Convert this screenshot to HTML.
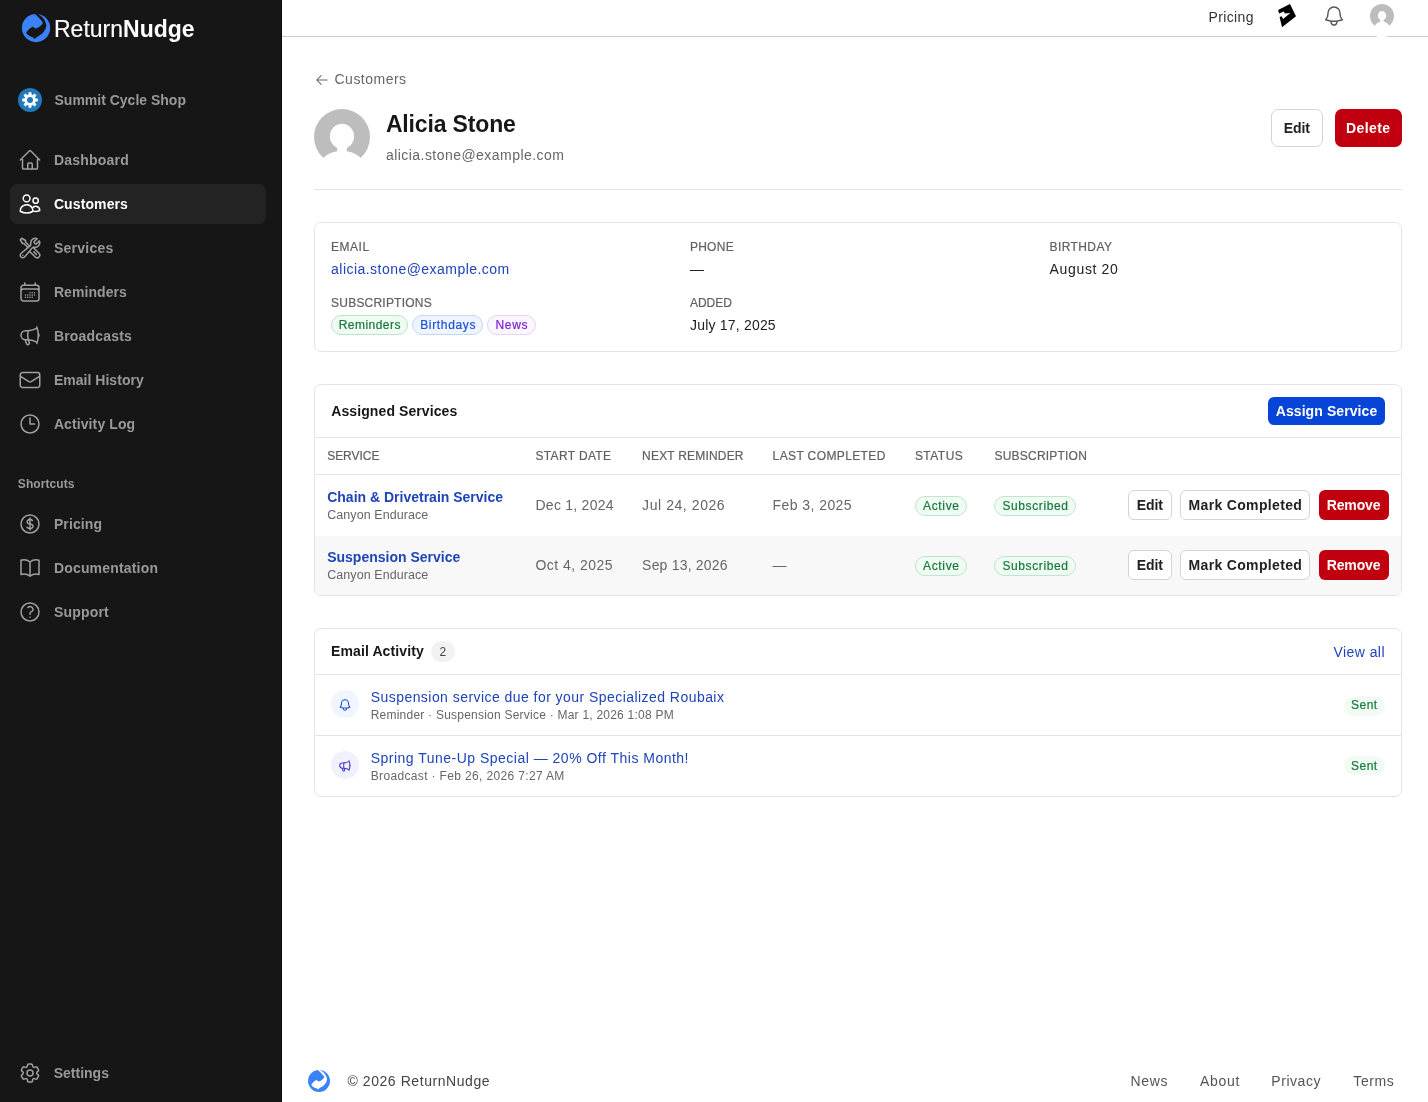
<!DOCTYPE html>
<html lang="en">
<head>
<meta charset="utf-8">
<title>Alicia Stone - ReturnNudge</title>
<style>
html,body{margin:0;padding:0;}
body{width:1428px;height:1102px;overflow:hidden;position:relative;background:#ffffff;font-family:"Liberation Sans",sans-serif;}
.t{position:absolute;white-space:nowrap;}
#tx{position:absolute;left:0;top:0;width:1428px;height:1102px;will-change:transform;}
.a{position:absolute;box-sizing:border-box;}
svg{position:absolute;overflow:visible;}
</style>
</head>
<body>
<!-- sidebar -->
<div class="a" style="left:0;top:0;width:282px;height:1102px;background:#161616;border-right:1px solid #0a0a0a"></div>
<div class="a" style="left:10px;top:184px;width:256px;height:40px;background:#232323;border-radius:7px"></div>
<!-- logo -->
<svg style="left:18px;top:10px" width="36" height="36" viewBox="0 0 1102 1102">
  <circle cx="552" cy="552" r="432" fill="#3b82f6"/>
  <path d="M490,95 C650,110 830,250 870,470 C850,620 760,740 620,800 L500,890 L465,840 C380,820 300,770 245,705 C300,610 380,540 450,515 L540,570 C640,545 720,470 765,390 C700,290 600,200 490,95 Z" fill="#161616"/>
</svg>
<div class="t" style="left:54.4px;top:14px;font-size:23px;line-height:30px;color:#fff;will-change:transform"><span style="-webkit-text-stroke:0.15px #fff">Return</span><b>Nudge</b></div>
<!-- summit -->
<svg style="left:18px;top:88px" width="24" height="24" viewBox="0 0 24 24">
  <circle cx="12" cy="12" r="12" fill="#2178bb"/>
  <g fill="#ffffff">
    <rect x="10.5" y="4.2" width="3" height="15.6" rx="0.5"/>
    <rect x="10.5" y="4.2" width="3" height="15.6" rx="0.5" transform="rotate(45 12 12)"/>
    <rect x="10.5" y="4.2" width="3" height="15.6" rx="0.5" transform="rotate(90 12 12)"/>
    <rect x="10.5" y="4.2" width="3" height="15.6" rx="0.5" transform="rotate(135 12 12)"/>
    <circle cx="12" cy="12" r="5.7"/>
  </g>
  <circle cx="12" cy="12" r="3" fill="#2178bb"/>
</svg>
<!-- header -->
<div class="a" style="left:282px;top:36px;width:1146px;height:1px;background:#cccccc"></div>
<svg style="left:1370px;top:4px" width="24" height="24" viewBox="0 0 56 56">
  <circle cx="28" cy="28" r="28" fill="#bdbdbd"/>
  <ellipse cx="28" cy="27.2" rx="9.7" ry="10.8" fill="#ffffff"/>
  <rect x="24" y="32" width="8" height="12" fill="#ffffff"/>
  <ellipse cx="28" cy="60.4" rx="18.8" ry="20" fill="#ffffff"/>
</svg>
<svg style="left:1276px;top:2px" width="24" height="28" viewBox="0 0 24 28">
  <path d="M14,2 L20,14.3 L6,25.3 L3.6,15.1 L5.6,14.3 L7.1,17 L14.3,11.1 L8.8,11.6 L7.9,9.6 L3,11.4 L2.1,7.9 Z" fill="#000000"/>
</svg>
<!-- page header -->
<svg style="left:314px;top:109px" width="56" height="56" viewBox="0 0 56 56">
  <defs><clipPath id="cav2"><circle cx="28" cy="28" r="28"/></clipPath></defs>
  <circle cx="28" cy="28" r="28" fill="#bdbdbd"/>
  <ellipse cx="28" cy="27.3" rx="12.1" ry="12.6" fill="#ffffff"/>
  <rect x="23.2" y="33" width="9.6" height="12" fill="#ffffff"/>
  <ellipse cx="28" cy="61.7" rx="24.2" ry="20" fill="#ffffff"/>
</svg>
<div class="a" style="left:1271px;top:109px;width:52px;height:38px;border:1px solid #d4d4d4;border-radius:7px;background:#fff"></div>
<div class="a" style="left:1335px;top:109px;width:67px;height:38px;border-radius:7px;background:#c0000f"></div>
<div class="a" style="left:314px;top:189px;width:1088px;height:1px;background:#e5e5e5"></div>
<!-- card1 -->
<div class="a" style="left:314px;top:222px;width:1088px;height:130px;border:1px solid #e5e5e5;border-radius:7px"></div>
<div class="a" style="left:331px;top:315px;width:77px;height:20px;border:1px solid #bbe5c8;border-radius:10px;background:#effbf3"></div>
<div class="a" style="left:412px;top:315px;width:71px;height:20px;border:1px solid #c3d7f5;border-radius:10px;background:#eef5fe"></div>
<div class="a" style="left:487px;top:315px;width:49px;height:20px;border:1px solid #e5d5f5;border-radius:10px;background:#faf5ff"></div>
<!-- card2 -->
<div class="a" style="left:314px;top:384px;width:1088px;height:212px;border:1px solid #e5e5e5;border-radius:7px;overflow:hidden">
  <div class="a" style="left:0;top:52px;width:1086px;height:1px;background:#e5e5e5"></div>
  <div class="a" style="left:0;top:89px;width:1086px;height:1px;background:#e5e5e5"></div>
  <div class="a" style="left:0;top:151px;width:1086px;height:59px;background:#f8f8f8"></div>
</div>
<div class="a" style="left:1268px;top:397px;width:117px;height:28px;border-radius:6px;background:#0645d8"></div>
<!-- badges & buttons rows -->
<div class="a" style="left:915px;top:496px;width:52px;height:20px;border:1px solid #bfe6cc;border-radius:10px;background:#effbf3"></div>
<div class="a" style="left:994px;top:496px;width:82px;height:20px;border:1px solid #bfe6cc;border-radius:10px;background:#effbf3"></div>
<div class="a" style="left:1128px;top:490px;width:44px;height:30px;border:1px solid #d4d4d4;border-radius:6px;background:#fff"></div>
<div class="a" style="left:1180px;top:490px;width:130px;height:30px;border:1px solid #d4d4d4;border-radius:6px;background:#fff"></div>
<div class="a" style="left:1319px;top:490px;width:70px;height:30px;border-radius:6px;background:#c0000f"></div>
<div class="a" style="left:915px;top:556px;width:52px;height:20px;border:1px solid #bfe6cc;border-radius:10px;background:#effbf3"></div>
<div class="a" style="left:994px;top:556px;width:82px;height:20px;border:1px solid #bfe6cc;border-radius:10px;background:#effbf3"></div>
<div class="a" style="left:1128px;top:550px;width:44px;height:30px;border:1px solid #d4d4d4;border-radius:6px;background:#fff"></div>
<div class="a" style="left:1180px;top:550px;width:130px;height:30px;border:1px solid #d4d4d4;border-radius:6px;background:#fff"></div>
<div class="a" style="left:1319px;top:550px;width:70px;height:30px;border-radius:6px;background:#c0000f"></div>
<!-- card3 -->
<div class="a" style="left:314px;top:628px;width:1088px;height:169px;border:1px solid #e5e5e5;border-radius:7px">
  <div class="a" style="left:0;top:45px;width:1086px;height:1px;background:#e5e5e5"></div>
  <div class="a" style="left:0;top:106px;width:1086px;height:1px;background:#e5e5e5"></div>
</div>
<div class="a" style="left:430.5px;top:641.3px;width:24px;height:21px;border-radius:11px;background:#f2f2f2"></div>
<div class="a" style="left:331px;top:690px;width:28px;height:28px;border-radius:50%;background:#f0f5fe"></div>
<div class="a" style="left:331px;top:751px;width:28px;height:28px;border-radius:50%;background:#f1f0fd"></div>
<div class="a" style="left:1344px;top:697px;width:41px;height:19px;border-radius:10px;background:#f1fbf4"></div>
<div class="a" style="left:1344px;top:756px;width:41px;height:19px;border-radius:10px;background:#f1fbf4"></div>
<!-- footer -->
<svg style="left:304.5px;top:1066.5px" width="28" height="28" viewBox="0 0 1102 1102">
  <circle cx="552" cy="552" r="432" fill="#3b82f6"/>
  <path d="M490,95 C650,110 830,250 870,470 C850,620 760,740 620,800 L500,890 L465,840 C380,820 300,770 245,705 C300,610 380,540 450,515 L540,570 C640,545 720,470 765,390 C700,290 600,200 490,95 Z" fill="#ffffff"/>
</svg>

<svg style="left:18px;top:148px" width="24" height="24" viewBox="0 0 24 24"><path d="M2.25 12l8.954-8.955c.44-.439 1.152-.439 1.591 0L21.75 12M4.5 9.75v10.125c0 .621.504 1.125 1.125 1.125H9.75v-4.875c0-.621.504-1.125 1.125-1.125h2.25c.621 0 1.125.504 1.125 1.125V21h4.125c.621 0 1.125-.504 1.125-1.125V9.75M8.25 21h8.25" fill="none" stroke="#a0a0a0" stroke-width="1.5" stroke-linecap="round" stroke-linejoin="round"/></svg>
<svg style="left:18px;top:192px" width="24" height="24" viewBox="0 0 24 24"><path d="M15 19.128a9.38 9.38 0 002.625.372 9.337 9.337 0 004.121-.952 4.125 4.125 0 00-7.533-2.493M15 19.128v-.003c0-1.113-.285-2.16-.786-3.07M15 19.128v.106A12.318 12.318 0 018.624 21c-2.331 0-4.512-.645-6.374-1.766l-.001-.109a6.375 6.375 0 0111.964-3.07M12 6.375a3.375 3.375 0 11-6.75 0 3.375 3.375 0 016.75 0zm8.25 2.25a2.625 2.625 0 11-5.25 0 2.625 2.625 0 015.25 0z" fill="none" stroke="#ffffff" stroke-width="1.5" stroke-linecap="round" stroke-linejoin="round"/></svg>
<svg style="left:18px;top:236px" width="24" height="24" viewBox="0 0 24 24"><path d="M11.42 15.17L17.25 21A2.652 2.652 0 0021 17.25l-5.877-5.877M11.42 15.17l2.496-3.03c.317-.384.74-.626 1.208-.766M11.42 15.17l-4.655 5.653a2.548 2.548 0 11-3.586-3.586l6.837-5.63m5.108-.233c.55-.164 1.163-.188 1.743-.14a4.5 4.5 0 004.486-6.336l-3.276 3.277a3.004 3.004 0 01-2.25-2.25l3.276-3.276a4.5 4.5 0 00-6.336 4.486c.091 1.076-.071 2.264-.904 2.95l-.102.085m-1.745 1.437L5.909 7.5H4.5L2.25 3.75l1.5-1.5L7.5 4.5v1.409l4.26 4.26m-1.745 1.437l1.745-1.437m6.615 8.206L15.75 15.75M4.867 19.125h.008v.008h-.008v-.008z" fill="none" stroke="#a0a0a0" stroke-width="1.5" stroke-linecap="round" stroke-linejoin="round"/></svg>
<svg style="left:18px;top:280px" width="24" height="24" viewBox="0 0 24 24"><path d="M6.75 3v2.25M17.25 3v2.25M3 18.75V7.5a2.25 2.25 0 012.25-2.25h13.5A2.25 2.25 0 0121 7.5v11.25m-18 0A2.25 2.25 0 005.25 21h13.5A2.25 2.25 0 0021 18.75m-18 0v-7.5A2.25 2.25 0 015.25 9h13.5A2.25 2.25 0 0121 11.25v7.5m-9-6h.008v.008H12v-.008zM12 15h.008v.008H12V15zm0 2.25h.008v.008H12v-.008zM9.75 15h.008v.008H9.75V15zm0 2.25h.008v.008H9.75v-.008zM7.5 15h.008v.008H7.5V15zm0 2.25h.008v.008H7.5v-.008zm6.75-4.5h.008v.008h-.008v-.008zm0 2.25h.008v.008h-.008V15zm0 2.25h.008v.008h-.008v-.008zm2.25-4.5h.008v.008H16.5v-.008zm0 2.25h.008v.008H16.5V15z" fill="none" stroke="#a0a0a0" stroke-width="1.5" stroke-linecap="round" stroke-linejoin="round"/></svg>
<svg style="left:18px;top:324px" width="24" height="24" viewBox="0 0 24 24"><path d="M10.34 15.84c-.688-.06-1.386-.09-2.09-.09H7.5a4.5 4.5 0 110-9h.75c.704 0 1.402-.03 2.09-.09m0 9.18c.253.962.584 1.892.985 2.783.247.55.06 1.21-.463 1.51l-.657.38c-.551.318-1.26.117-1.527-.461a20.845 20.845 0 01-1.44-4.282m3.102.069a18.03 18.03 0 01-.59-4.59c0-1.586.205-3.124.59-4.59m0 9.18a23.848 23.848 0 018.835 2.535M10.34 6.66a23.847 23.847 0 008.835-2.535m0 0A23.74 23.74 0 0018.795 3m.38 1.125a23.91 23.91 0 011.014 5.395m-1.014 8.855c-.118.38-.245.754-.38 1.125m.38-1.125a23.91 23.91 0 001.014-5.395m0-3.46c.495.413.811 1.035.811 1.73 0 .695-.316 1.317-.811 1.73m0-3.46a24.347 24.347 0 010 3.46" fill="none" stroke="#a0a0a0" stroke-width="1.5" stroke-linecap="round" stroke-linejoin="round"/></svg>
<svg style="left:18px;top:368px" width="24" height="24" viewBox="0 0 24 24"><path d="M21.75 6.75v10.5a2.25 2.25 0 01-2.25 2.25h-15a2.25 2.25 0 01-2.25-2.25V6.75m19.5 0A2.25 2.25 0 0019.5 4.5h-15a2.25 2.25 0 00-2.25 2.25m19.5 0v.243a2.25 2.25 0 01-1.07 1.916l-7.5 4.615a2.25 2.25 0 01-2.36 0L3.32 8.91a2.25 2.25 0 01-1.07-1.916V6.75" fill="none" stroke="#a0a0a0" stroke-width="1.5" stroke-linecap="round" stroke-linejoin="round"/></svg>
<svg style="left:18px;top:412px" width="24" height="24" viewBox="0 0 24 24"><path d="M12 6v6h4.5m4.5 0a9 9 0 11-18 0 9 9 0 0118 0z" fill="none" stroke="#a0a0a0" stroke-width="1.5" stroke-linecap="round" stroke-linejoin="round"/></svg>
<svg style="left:18px;top:512px" width="24" height="24" viewBox="0 0 24 24"><path d="M12 6v12m-3-2.818l.879.659c1.171.879 3.07.879 4.242 0 1.172-.879 1.172-2.303 0-3.182C13.536 12.219 12.768 12 12 12c-.725 0-1.45-.22-2.003-.659-1.106-.879-1.106-2.303 0-3.182s2.9-.879 4.006 0l.415.33M21 12a9 9 0 11-18 0 9 9 0 0118 0z" fill="none" stroke="#a0a0a0" stroke-width="1.5" stroke-linecap="round" stroke-linejoin="round"/></svg>
<svg style="left:18px;top:556px" width="24" height="24" viewBox="0 0 24 24"><path d="M12 6.042A8.967 8.967 0 006 3.75c-1.052 0-2.062.18-3 .512v14.25A8.987 8.987 0 016 18c2.305 0 4.408.867 6 2.292m0-14.25a8.966 8.966 0 016-2.292c1.052 0 2.062.18 3 .512v14.25A8.987 8.987 0 0018 18a8.967 8.967 0 00-6 2.292m0-14.25v14.25" fill="none" stroke="#a0a0a0" stroke-width="1.5" stroke-linecap="round" stroke-linejoin="round"/></svg>
<svg style="left:18px;top:600px" width="24" height="24" viewBox="0 0 24 24"><path d="M9.879 7.519c1.171-1.025 3.071-1.025 4.242 0 1.172 1.025 1.172 2.687 0 3.712-.203.179-.43.326-.67.442-.745.361-1.45.999-1.45 1.827v.75M21 12a9 9 0 11-18 0 9 9 0 0118 0zm-9 5.25h.008v.008H12v-.008z" fill="none" stroke="#a0a0a0" stroke-width="1.5" stroke-linecap="round" stroke-linejoin="round"/></svg>
<svg style="left:18px;top:1061px" width="24" height="24" viewBox="0 0 24 24"><path d="M9.594 3.94c.09-.542.56-.94 1.11-.94h2.593c.55 0 1.02.398 1.11.94l.213 1.281c.063.374.313.686.645.87.074.04.147.083.22.127.325.196.72.257 1.075.124l1.217-.456a1.125 1.125 0 011.37.49l1.296 2.247a1.125 1.125 0 01-.26 1.431l-1.003.827c-.293.241-.438.613-.43.992a7.723 7.723 0 010 .255c-.008.378.137.75.43.991l1.004.827c.424.35.534.955.26 1.43l-1.298 2.247a1.125 1.125 0 01-1.369.491l-1.217-.456c-.355-.133-.75-.072-1.076.124a6.47 6.47 0 01-.22.128c-.331.183-.581.495-.644.869l-.213 1.281c-.09.543-.56.94-1.11.94h-2.594c-.55 0-1.019-.398-1.11-.94l-.213-1.281c-.062-.374-.312-.686-.644-.87a6.52 6.52 0 01-.22-.127c-.325-.196-.72-.257-1.076-.124l-1.217.456a1.125 1.125 0 01-1.369-.49l-1.297-2.247a1.125 1.125 0 01.26-1.431l1.004-.827c.292-.24.437-.613.43-.991a6.932 6.932 0 010-.255c.007-.38-.138-.751-.43-.992l-1.004-.827a1.125 1.125 0 01-.26-1.43l1.297-2.247a1.125 1.125 0 011.37-.491l1.216.456c.356.133.751.072 1.076-.124.072-.044.146-.086.22-.128.332-.183.582-.495.644-.869l.214-1.28zM15 12a3 3 0 11-6 0 3 3 0 016 0z" fill="none" stroke="#a0a0a0" stroke-width="1.5" stroke-linecap="round" stroke-linejoin="round"/></svg>
<svg style="left:1322px;top:4px" width="24" height="24" viewBox="0 0 24 24"><path d="M14.857 17.082a23.848 23.848 0 005.454-1.31A8.967 8.967 0 0118 9.75v-.7V9A6 6 0 006 9v.75a8.967 8.967 0 01-2.312 6.022c1.733.64 3.56 1.085 5.455 1.31m5.714 0a24.255 24.255 0 01-5.714 0m5.714 0a3 3 0 11-5.714 0" fill="none" stroke="#555555" stroke-width="1.4" stroke-linecap="round" stroke-linejoin="round"/></svg>
<svg style="left:315px;top:73px" width="14" height="14" viewBox="0 0 24 24"><path d="M10.5 19.5L3 12m0 0l7.5-7.5M3 12h18" fill="none" stroke="#666666" stroke-width="1.8" stroke-linecap="round" stroke-linejoin="round"/></svg>
<svg style="left:338px;top:697.5px" width="14" height="14" viewBox="0 0 24 24"><path d="M14.857 17.082a23.848 23.848 0 005.454-1.31A8.967 8.967 0 0118 9.75v-.7V9A6 6 0 006 9v.75a8.967 8.967 0 01-2.312 6.022c1.733.64 3.56 1.085 5.455 1.31m5.714 0a24.255 24.255 0 01-5.714 0m5.714 0a3 3 0 11-5.714 0" fill="none" stroke="#1d4ed8" stroke-width="1.8" stroke-linecap="round" stroke-linejoin="round"/></svg>
<svg style="left:338px;top:758.5px" width="14" height="14" viewBox="0 0 24 24"><path d="M10.34 15.84c-.688-.06-1.386-.09-2.09-.09H7.5a4.5 4.5 0 110-9h.75c.704 0 1.402-.03 2.09-.09m0 9.18c.253.962.584 1.892.985 2.783.247.55.06 1.21-.463 1.51l-.657.38c-.551.318-1.26.117-1.527-.461a20.845 20.845 0 01-1.44-4.282m3.102.069a18.03 18.03 0 01-.59-4.59c0-1.586.205-3.124.59-4.59m0 9.18a23.848 23.848 0 018.835 2.535M10.34 6.66a23.847 23.847 0 008.835-2.535m0 0A23.74 23.74 0 0018.795 3m.38 1.125a23.91 23.91 0 011.014 5.395m-1.014 8.855c-.118.38-.245.754-.38 1.125m.38-1.125a23.91 23.91 0 001.014-5.395m0-3.46c.495.413.811 1.035.811 1.73 0 .695-.316 1.317-.811 1.73m0-3.46a24.347 24.347 0 010 3.46" fill="none" stroke="#4338ca" stroke-width="1.8" stroke-linecap="round" stroke-linejoin="round"/></svg>
<div id="tx">
<div class="t" style="left:54.5px;top:91.1px;font-size:14px;line-height:18px;color:#999999;font-weight:700">Summit Cycle Shop</div>
<div class="t" style="left:53.9px;top:151.1px;font-size:14px;line-height:18px;color:#999999;font-weight:700;letter-spacing:0.23px">Dashboard</div>
<div class="t" style="left:53.9px;top:195.1px;font-size:14px;line-height:18px;color:#ffffff;font-weight:700;letter-spacing:0.11px">Customers</div>
<div class="t" style="left:53.9px;top:239.1px;font-size:14px;line-height:18px;color:#999999;font-weight:700;letter-spacing:0.26px">Services</div>
<div class="t" style="left:53.9px;top:283.1px;font-size:14px;line-height:18px;color:#999999;font-weight:700;letter-spacing:0.07px">Reminders</div>
<div class="t" style="left:53.9px;top:327.1px;font-size:14px;line-height:18px;color:#999999;font-weight:700;letter-spacing:0.18px">Broadcasts</div>
<div class="t" style="left:53.9px;top:371.1px;font-size:14px;line-height:18px;color:#999999;font-weight:700;letter-spacing:0.03px">Email History</div>
<div class="t" style="left:53.9px;top:415.1px;font-size:14px;line-height:18px;color:#999999;font-weight:700;letter-spacing:0.10px">Activity Log</div>
<div class="t" style="left:17.8px;top:477.3px;font-size:12px;line-height:15px;color:#9a9a9a;font-weight:700;letter-spacing:0.09px">Shortcuts</div>
<div class="t" style="left:53.9px;top:515.1px;font-size:14px;line-height:18px;color:#999999;font-weight:700;letter-spacing:0.12px">Pricing</div>
<div class="t" style="left:53.9px;top:559.1px;font-size:14px;line-height:18px;color:#999999;font-weight:700;letter-spacing:0.18px">Documentation</div>
<div class="t" style="left:53.9px;top:603.1px;font-size:14px;line-height:18px;color:#999999;font-weight:700;letter-spacing:0.19px">Support</div>
<div class="t" style="left:53.7px;top:1064.1px;font-size:14px;line-height:18px;color:#999999;font-weight:700">Settings</div>
<div class="t" style="left:1208.5px;top:8.1px;font-size:14px;line-height:18px;color:#333333;letter-spacing:0.37px">Pricing</div>
<div class="t" style="left:334.5px;top:70.1px;font-size:14px;line-height:18px;color:#666666;letter-spacing:0.49px">Customers</div>
<div class="t" style="left:385.9px;top:109.9px;font-size:23px;line-height:29px;color:#171717;font-weight:700;letter-spacing:-0.15px">Alicia Stone</div>
<div class="t" style="left:385.9px;top:146.1px;font-size:14px;line-height:18px;color:#666666;letter-spacing:0.46px">alicia.stone@example.com</div>
<div class="t" style="left:1283.8px;top:118.9px;font-size:14px;line-height:18px;color:#222222;font-weight:700;letter-spacing:-0.15px">Edit</div>
<div class="t" style="left:1346.1px;top:118.9px;font-size:14px;line-height:18px;color:#ffffff;font-weight:700;letter-spacing:0.39px">Delete</div>
<div class="t" style="left:331.1px;top:240.3px;font-size:12px;line-height:15px;color:#606060;-webkit-text-stroke:0.2px #606060;letter-spacing:0.50px">EMAIL</div>
<div class="t" style="left:331.1px;top:260.1px;font-size:14px;line-height:18px;color:#1e44b8;letter-spacing:0.46px">alicia.stone@example.com</div>
<div class="t" style="left:331.1px;top:296.3px;font-size:12px;line-height:15px;color:#606060;-webkit-text-stroke:0.2px #606060;letter-spacing:0.21px">SUBSCRIPTIONS</div>
<div class="t" style="left:689.9px;top:240.3px;font-size:12px;line-height:15px;color:#606060;-webkit-text-stroke:0.2px #606060;letter-spacing:0.28px">PHONE</div>
<div class="t" style="left:689.9px;top:260.1px;font-size:14px;line-height:18px;color:#222222">—</div>
<div class="t" style="left:689.9px;top:296.3px;font-size:12px;line-height:15px;color:#606060;-webkit-text-stroke:0.2px #606060">ADDED</div>
<div class="t" style="left:690.1px;top:315.8px;font-size:14px;line-height:18px;color:#222222;letter-spacing:0.19px">July 17, 2025</div>
<div class="t" style="left:1049.6px;top:240.3px;font-size:12px;line-height:15px;color:#606060;-webkit-text-stroke:0.2px #606060;letter-spacing:0.39px">BIRTHDAY</div>
<div class="t" style="left:1049.6px;top:259.7px;font-size:14px;line-height:18px;color:#222222;letter-spacing:0.65px">August 20</div>
<div class="t" style="left:338.7px;top:318.1px;font-size:12px;line-height:15px;color:#15783a;-webkit-text-stroke:0.2px #15783a;letter-spacing:0.47px">Reminders</div>
<div class="t" style="left:420.2px;top:318.1px;font-size:12px;line-height:15px;color:#1d4ed8;-webkit-text-stroke:0.2px #1d4ed8;letter-spacing:0.66px">Birthdays</div>
<div class="t" style="left:495.5px;top:318.1px;font-size:12px;line-height:15px;color:#7e22ce;-webkit-text-stroke:0.2px #7e22ce;letter-spacing:0.66px">News</div>
<div class="t" style="left:331.3px;top:402.1px;font-size:14px;line-height:18px;color:#171717;font-weight:700;letter-spacing:0.09px">Assigned Services</div>
<div class="t" style="left:1275.7px;top:402.1px;font-size:14px;line-height:18px;color:#ffffff;font-weight:700;letter-spacing:0.09px">Assign Service</div>
<div class="t" style="left:327.2px;top:449.3px;font-size:12px;line-height:15px;color:#606060;-webkit-text-stroke:0.2px #606060;letter-spacing:-0.04px">SERVICE</div>
<div class="t" style="left:535.5px;top:449.3px;font-size:12px;line-height:15px;color:#606060;-webkit-text-stroke:0.2px #606060;letter-spacing:0.34px">START DATE</div>
<div class="t" style="left:642.1px;top:449.3px;font-size:12px;line-height:15px;color:#606060;-webkit-text-stroke:0.2px #606060;letter-spacing:0.19px">NEXT REMINDER</div>
<div class="t" style="left:772.6px;top:449.3px;font-size:12px;line-height:15px;color:#606060;-webkit-text-stroke:0.2px #606060;letter-spacing:0.38px">LAST COMPLETED</div>
<div class="t" style="left:914.9px;top:449.3px;font-size:12px;line-height:15px;color:#606060;-webkit-text-stroke:0.2px #606060;letter-spacing:0.47px">STATUS</div>
<div class="t" style="left:994.5px;top:449.3px;font-size:12px;line-height:15px;color:#606060;-webkit-text-stroke:0.2px #606060;letter-spacing:0.21px">SUBSCRIPTION</div>
<div class="t" style="left:327.2px;top:488.1px;font-size:14px;line-height:18px;color:#1e44b8;font-weight:700">Chain &amp; Drivetrain Service</div>
<div class="t" style="left:327.2px;top:506.7px;font-size:12.5px;line-height:16px;color:#666666;letter-spacing:0.07px">Canyon Endurace</div>
<div class="t" style="left:535.5px;top:495.9px;font-size:14px;line-height:18px;color:#666666;letter-spacing:0.25px">Dec 1, 2024</div>
<div class="t" style="left:642.1px;top:495.9px;font-size:14px;line-height:18px;color:#666666;letter-spacing:0.57px">Jul 24, 2026</div>
<div class="t" style="left:772.6px;top:495.9px;font-size:14px;line-height:18px;color:#666666;letter-spacing:0.43px">Feb 3, 2025</div>
<div class="t" style="left:923.0px;top:498.9px;font-size:12px;line-height:15px;color:#15783a;-webkit-text-stroke:0.2px #15783a;letter-spacing:0.66px">Active</div>
<div class="t" style="left:1002.5px;top:498.9px;font-size:12px;line-height:15px;color:#15783a;-webkit-text-stroke:0.2px #15783a;letter-spacing:0.59px">Subscribed</div>
<div class="t" style="left:1136.8px;top:496.1px;font-size:14px;line-height:18px;color:#222222;font-weight:700;letter-spacing:-0.15px">Edit</div>
<div class="t" style="left:1188.5px;top:496.1px;font-size:14px;line-height:18px;color:#222222;font-weight:700;letter-spacing:0.34px">Mark Completed</div>
<div class="t" style="left:1326.7px;top:496.1px;font-size:14px;line-height:18px;color:#ffffff;font-weight:700;letter-spacing:-0.13px">Remove</div>
<div class="t" style="left:327.2px;top:548.2px;font-size:14px;line-height:18px;color:#1e44b8;font-weight:700">Suspension Service</div>
<div class="t" style="left:327.2px;top:566.8px;font-size:12.5px;line-height:16px;color:#666666;letter-spacing:0.07px">Canyon Endurace</div>
<div class="t" style="left:535.5px;top:555.9px;font-size:14px;line-height:18px;color:#666666;letter-spacing:0.46px">Oct 4, 2025</div>
<div class="t" style="left:642.1px;top:555.9px;font-size:14px;line-height:18px;color:#666666;letter-spacing:0.20px">Sep 13, 2026</div>
<div class="t" style="left:772.6px;top:555.9px;font-size:14px;line-height:18px;color:#666666">—</div>
<div class="t" style="left:923.0px;top:559.0px;font-size:12px;line-height:15px;color:#15783a;-webkit-text-stroke:0.2px #15783a;letter-spacing:0.66px">Active</div>
<div class="t" style="left:1002.5px;top:559.0px;font-size:12px;line-height:15px;color:#15783a;-webkit-text-stroke:0.2px #15783a;letter-spacing:0.59px">Subscribed</div>
<div class="t" style="left:1136.8px;top:556.2px;font-size:14px;line-height:18px;color:#222222;font-weight:700;letter-spacing:-0.15px">Edit</div>
<div class="t" style="left:1188.5px;top:556.2px;font-size:14px;line-height:18px;color:#222222;font-weight:700;letter-spacing:0.34px">Mark Completed</div>
<div class="t" style="left:1326.7px;top:556.2px;font-size:14px;line-height:18px;color:#ffffff;font-weight:700;letter-spacing:-0.13px">Remove</div>
<div class="t" style="left:331.0px;top:642.1px;font-size:14px;line-height:18px;color:#171717;font-weight:700;letter-spacing:0.11px">Email Activity</div>
<div class="t" style="left:439.5px;top:644.8px;font-size:12px;line-height:15px;color:#444444">2</div>
<div class="t" style="left:1333.5px;top:643.1px;font-size:14px;line-height:18px;color:#1e44b8;letter-spacing:0.43px">View all</div>
<div class="t" style="left:370.7px;top:687.9px;font-size:14px;line-height:18px;color:#1e44b8;letter-spacing:0.45px">Suspension service due for your Specialized Roubaix</div>
<div class="t" style="left:370.7px;top:708.4px;font-size:12px;line-height:15px;color:#666666;letter-spacing:0.23px">Reminder · Suspension Service · Mar 1, 2026 1:08 PM</div>
<div class="t" style="left:1350.9px;top:698.1px;font-size:12px;line-height:15px;color:#15783a;-webkit-text-stroke:0.2px #15783a;letter-spacing:0.54px">Sent</div>
<div class="t" style="left:370.7px;top:749.1px;font-size:14px;line-height:18px;color:#1e44b8;letter-spacing:0.49px">Spring Tune-Up Special — 20% Off This Month!</div>
<div class="t" style="left:370.7px;top:769.3px;font-size:12px;line-height:15px;color:#666666;letter-spacing:0.35px">Broadcast · Feb 26, 2026 7:27 AM</div>
<div class="t" style="left:1350.9px;top:759.1px;font-size:12px;line-height:15px;color:#15783a;-webkit-text-stroke:0.2px #15783a;letter-spacing:0.54px">Sent</div>
<div class="t" style="left:347.5px;top:1071.6px;font-size:14px;line-height:18px;color:#444444;letter-spacing:0.56px">© 2026 ReturnNudge</div>
<div class="t" style="left:1130.5px;top:1072.1px;font-size:14px;line-height:18px;color:#555555;letter-spacing:0.66px">News</div>
<div class="t" style="left:1199.9px;top:1072.1px;font-size:14px;line-height:18px;color:#555555;letter-spacing:0.75px">About</div>
<div class="t" style="left:1271.3px;top:1072.1px;font-size:14px;line-height:18px;color:#555555;letter-spacing:0.55px">Privacy</div>
<div class="t" style="left:1353.3px;top:1072.1px;font-size:14px;line-height:18px;color:#555555;letter-spacing:0.59px">Terms</div>
</div>
</body>
</html>
